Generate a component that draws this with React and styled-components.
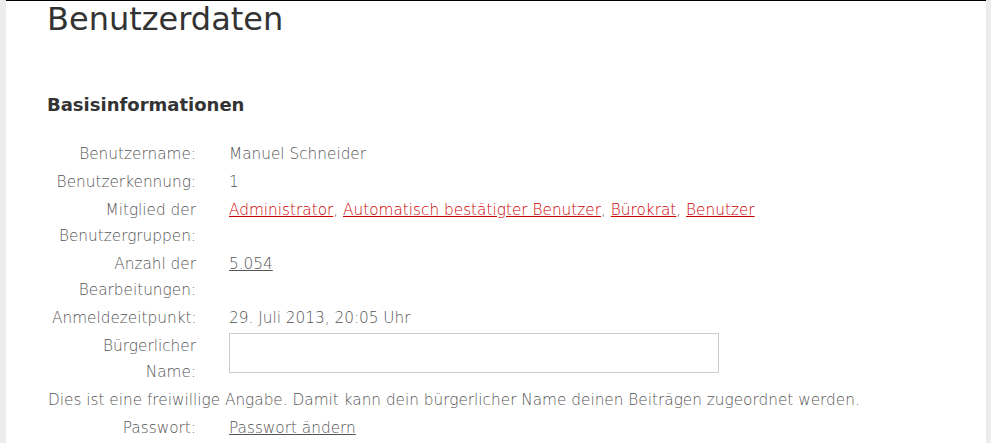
import React from "react";
import styled, { createGlobalStyle } from "styled-components";

const Global = createGlobalStyle`
  html, body { margin: 0; padding: 0; background: #ececec; }
  body { font-family: "DejaVu Sans", "Liberation Sans", sans-serif; }
`;

const Page = styled.div`
  background: #ececec;
  padding: 0 5px 0 6px;
  min-height: 443px;
  box-sizing: border-box;
`;

const Content = styled.main`
  background: #fff;
  border-top: 1px solid #000;
  padding: 0 0 20px 41px;
  min-height: 442px;
  box-sizing: border-box;
`;

const Title = styled.h1`
  margin: 0;
  font-size: 32px;
  font-weight: 400;
  line-height: 37px;
  color: #333;
`;

const Section = styled.h2`
  margin: 56px 0 0;
  font-size: 18px;
  font-weight: 700;
  line-height: 21px;
  color: #333;
`;

const Fields = styled.div`
  margin-top: 26px;
  display: grid;
  grid-template-columns: 149px 1fr;
  column-gap: 33px;
  row-gap: 2px;
  font-size: 15.3px;
  font-weight: 200;
  line-height: 26px;
  color: #555;
`;

const Label = styled.div`
  text-align: right;
  padding-left: 5px;
`;

const Value = styled.div`
  min-width: 0;
`;

const Note = styled.div`
  grid-column: 1 / -1;
  padding-left: 1px;
`;

const Link = styled.a`
  color: ${(p) => (p.$red ? "#cc0000" : "#555")};
  text-decoration: underline;
`;

const TextInput = styled.input`
  display: block;
  width: 490px;
  height: 40px;
  box-sizing: border-box;
  border: 1px solid #cccccc;
  background: #fff;
  margin: 0;
  padding: 0 6px;
  font: inherit;
`;

export default function App() {
  return (
    <>
      <Global />
      <Page>
        <Content>
          <Title>Benutzerdaten</Title>
          <Section>Basisinformationen</Section>
          <Fields>
            <Label>Benutzername:</Label>
            <Value>Manuel Schneider</Value>
            <Label>Benutzerkennung:</Label>
            <Value>1</Value>
            <Label>Mitglied der Benutzergruppen:</Label>
            <Value>
              <Link $red href="#">Administrator</Link>,{" "}
              <Link $red href="#">Automatisch bestätigter Benutzer</Link>,{" "}
              <Link $red href="#">Bürokrat</Link>,{" "}
              <Link $red href="#">Benutzer</Link>
            </Value>
            <Label>Anzahl der Bearbeitungen:</Label>
            <Value>
              <Link href="#">5.054</Link>
            </Value>
            <Label>Anmeldezeitpunkt:</Label>
            <Value>29. Juli 2013, 20:05 Uhr</Value>
            <Label>Bürgerlicher Name:</Label>
            <Value>
              <TextInput type="text" />
            </Value>
            <Note>
              Dies ist eine freiwillige Angabe. Damit kann dein bürgerlicher Name deinen Beiträgen zugeordnet werden.
            </Note>
            <Label>Passwort:</Label>
            <Value>
              <Link href="#">Passwort ändern</Link>
            </Value>
          </Fields>
        </Content>
      </Page>
    </>
  );
}
